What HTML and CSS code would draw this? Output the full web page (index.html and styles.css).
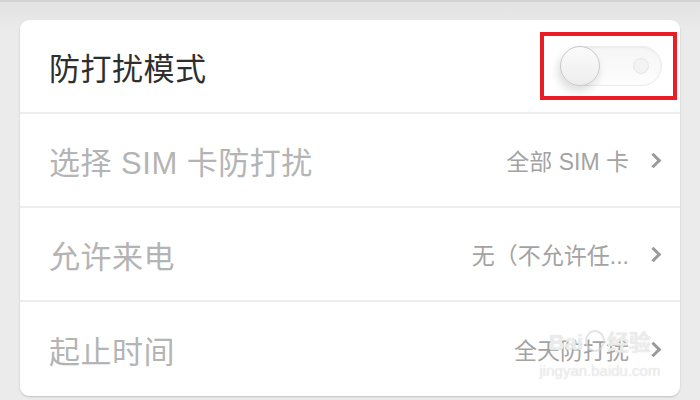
FILE: index.html
```html
<!DOCTYPE html>
<html lang="zh">

<head>
  <meta charset="UTF-8">
  <meta name="viewport" content="width=device-width, initial-scale=1.0">
  <title>防打扰模式</title>
  <link rel="stylesheet" href="styles.css">
</head>

<body>
  <div class="page">
    <div class="card">
      <div class="row">
        <div class="name">防打扰模式</div>
        <div class="switch">
          <div class="knob"></div>
          <div class="dot"></div>
        </div>
        <div class="mark"></div>
      </div>
      <div class="row">
        <div class="name off">选择 SIM 卡防打扰</div>
        <div class="val">全部 SIM 卡<span class="arrow"></span></div>
      </div>
      <div class="row">
        <div class="name off">允许来电</div>
        <div class="val">无（不允许任...<span class="arrow"></span></div>
      </div>
      <div class="row">
        <div class="name off">起止时间</div>
        <div class="val">全天防打扰<span class="arrow"></span></div>
        <div class="wm">
          <div class="wm-logo">Bai<span class="paw"></span>经验</div>
          <div class="wm-url">jingyan.baidu.com</div>
        </div>
      </div>
    </div>
  </div>
</body>

</html>
```

FILE: styles.css
```css
body,
div,
span {
  margin: 0;
  padding: 0;
}

body {
  background-color: #e9e9e9;
  font-family: "Liberation Sans", "Noto Sans CJK SC", sans-serif;
}

.page {
  height: 398px;
  border-top: 2px solid #d2d2d2;
  padding: 18px 20px 0 20px;
  background: linear-gradient(180deg, #e2e2e2, #ebebeb 30px);
}

.card {
  width: 660px;
  background-color: #fff;
  border-radius: 9px;
  box-shadow: 0 1px 2px rgba(0, 0, 0, 0.18);
  overflow: hidden;
}

.row {
  position: relative;
  height: 92px;
  display: flex;
  align-items: center;
  justify-content: space-between;
  padding: 0 18px 0 29px;
  border-bottom: 2px solid #ededed;
}

.row:last-child {
  border-bottom: none;
  height: 94px;
}

.name {
  font-size: 31px;
  color: #2e2e2e;
  letter-spacing: 0.5px;
}

.off {
  color: #b4b4b4;
}

.val {
  display: flex;
  align-items: center;
  font-size: 23px;
  color: #a3a3a3;
}

.arrow {
  width: 8px;
  height: 8px;
  border-top: 3px solid #9a9a9a;
  border-right: 3px solid #9a9a9a;
  transform: rotate(45deg);
  margin-left: 19px;
  margin-right: 3px;
}

/* switch */
.switch {
  position: relative;
  width: 102px;
  height: 40px;
  border-radius: 20px;
  background: linear-gradient(180deg, #f6f6f6, #fdfdfd);
  border: 1px solid #ececec;
  box-sizing: border-box;
  box-shadow: inset 0 1px 3px rgba(0, 0, 0, 0.05);
}

.knob {
  position: absolute;
  left: -1px;
  top: -1px;
  width: 40px;
  height: 40px;
  border-radius: 50%;
  background: linear-gradient(180deg, #fbfbfb, #ededed);
  border: 1px solid #c9c9c9;
  box-sizing: border-box;
  box-shadow: -2px 5px 10px rgba(0, 0, 0, 0.14);
}

.dot {
  position: absolute;
  left: 72px;
  top: 11px;
  width: 16px;
  height: 16px;
  border-radius: 50%;
  background-color: #f3f3f3;
  border: 1px solid #e6e6e6;
  box-sizing: border-box;
}

.mark {
  position: absolute;
  left: 520px;
  top: 12px;
  width: 137px;
  height: 68px;
  border: 4px solid #ec1c24;
  box-sizing: border-box;
}

/* watermark */
.wm {
  position: absolute;
  left: 518px;
  top: 26px;
  width: 124px;
  text-align: center;
  white-space: nowrap;
  color: rgba(255, 255, 255, 0.6);
  text-shadow: 0 0 1px #cdcdcd;
}

.wm-logo {
  font-size: 22px;
  font-weight: 700;
  line-height: 30px;
}

.paw {
  display: inline-block;
  width: 16px;
  height: 18px;
  margin: 0 2px;
  border-radius: 50%;
  border: 2px solid rgba(210, 210, 210, 0.6);
  vertical-align: -2px;
}

.wm-url {
  font-size: 15px;
  line-height: 18px;
  margin-top: 4px;
}
```
